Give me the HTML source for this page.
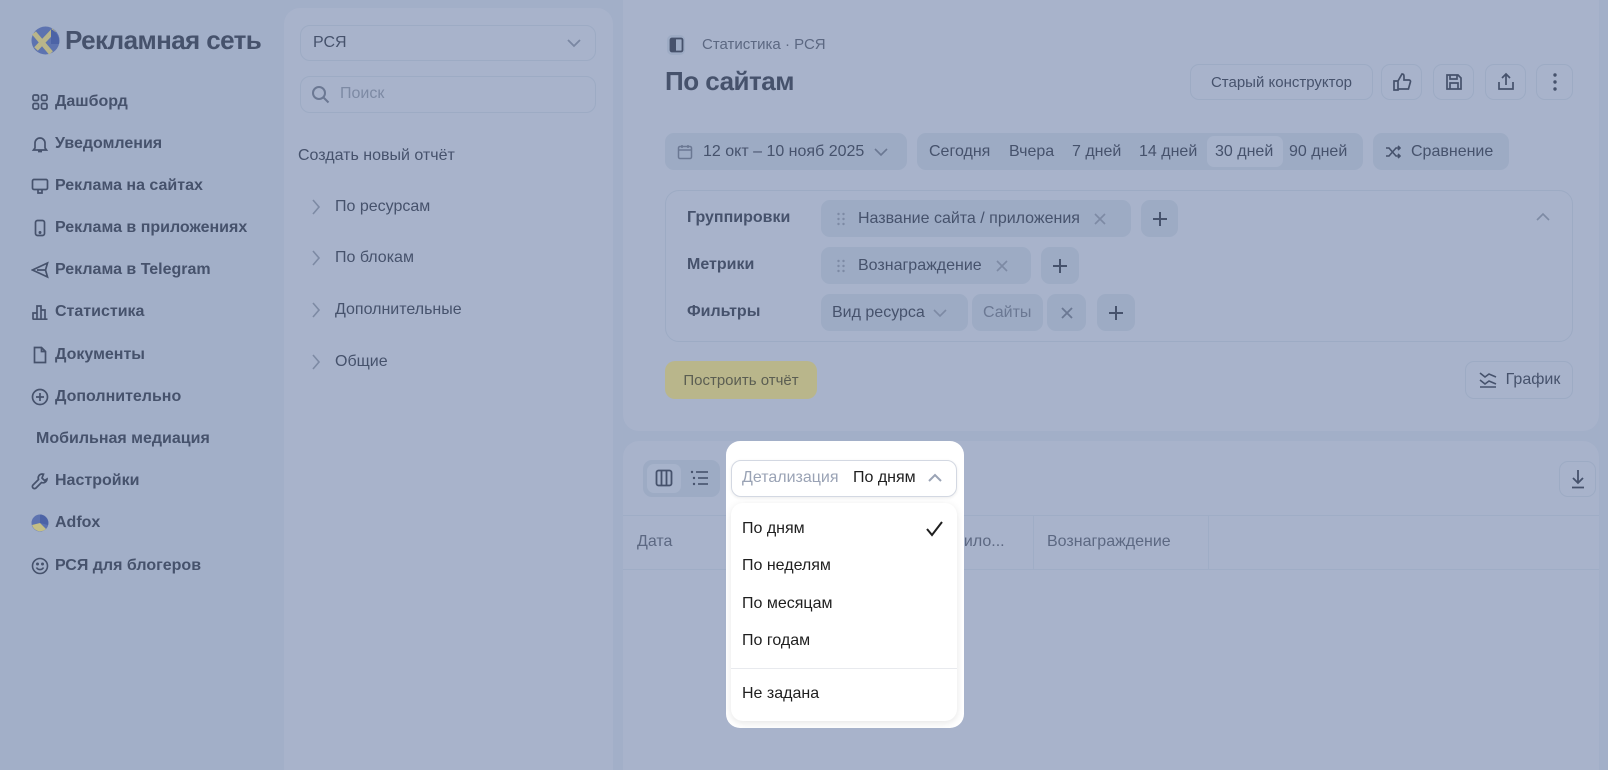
<!DOCTYPE html>
<html style="width:1608px;height:770px;overflow:hidden"><head><meta charset="utf-8"><style>
*{box-sizing:border-box;margin:0;padding:0}
html,body{width:1608px;height:770px;overflow:hidden}
body{background:#a2afc8;font-family:"Liberation Sans","DejaVu Sans",sans-serif;color:#434f69;position:relative}
.a{position:absolute}
.nav{position:absolute;left:31px;font-size:16px;font-weight:bold;color:#46526c;display:flex;align-items:center;gap:6px;height:20px}
.nav svg{width:18px;height:18px}
.panel{position:absolute;background:#a8b3cb;border-radius:16px}
.btn{position:absolute;border:1px solid #9dabc4;border-radius:9px;display:flex;align-items:center;justify-content:center;font-size:15px;color:#46526c}
.chip{position:absolute;background:#9dabc4;border-radius:9px;display:flex;align-items:center;font-size:16px;color:#46526c;height:37px}
.tree{position:absolute;left:310px;font-size:16px;color:#46526c}
.tree span{position:absolute;left:25px;white-space:nowrap}
.mi{position:absolute;left:742px;font-size:16px;color:#1f1f1f}
</style></head><body>

<!-- sidebar -->
<svg class="a" style="left:31px;top:26px" width="29" height="29" viewBox="0 0 29 29"><circle cx="14.5" cy="14.5" r="14" fill="#5d73b0"/><path d="M3 7 L20 27 M5 23 L23 4" stroke="#b9b58a" stroke-width="5"/><path d="M20 3 A14 14 0 0 1 28 18 L20 18Z" fill="#4c63a6"/></svg>
<div class="a" style="left:65px;top:25px;font-size:26px;font-weight:bold;color:#46526c;letter-spacing:-0.6px">Рекламная сеть</div>

<div class="nav" style="top:92px"><svg viewBox="0 0 18 18" fill="none" stroke="#46526c" stroke-width="1.7"><rect x="2" y="2" width="5.5" height="5.5" rx="1.5"/><rect x="10.5" y="2" width="5.5" height="5.5" rx="1.5"/><rect x="2" y="10.5" width="5.5" height="5.5" rx="1.5"/><rect x="10.5" y="10.5" width="5.5" height="5.5" rx="1.5"/></svg>Дашборд</div>
<div class="nav" style="top:134px"><svg viewBox="0 0 18 18" fill="none" stroke="#46526c" stroke-width="1.7"><path d="M4 13V8a5 5 0 0 1 10 0v5l1.5 2h-13z M7 16.5h4"/></svg>Уведомления</div>
<div class="nav" style="top:176px"><svg viewBox="0 0 18 18" fill="none" stroke="#46526c" stroke-width="1.7"><rect x="1.5" y="2.5" width="15" height="10" rx="1.5"/><path d="M7 13v3h4v-3"/></svg>Реклама на сайтах</div>
<div class="nav" style="top:218px"><svg viewBox="0 0 18 18" fill="none" stroke="#46526c" stroke-width="1.7"><rect x="4.5" y="1.5" width="9" height="15" rx="2"/><circle cx="9" cy="13.5" r=".6" fill="#46526c"/></svg>Реклама в приложениях</div>
<div class="nav" style="top:260px"><svg viewBox="0 0 18 18" fill="none" stroke="#46526c" stroke-width="1.7"><path d="M16.5 2 L1.5 9 L16.5 16 L14.5 9Z M14.5 9 H6"/></svg>Реклама в Telegram</div>
<div class="nav" style="top:302px"><svg viewBox="0 0 18 18" fill="none" stroke="#46526c" stroke-width="1.7"><path d="M2 16V10h4v6 M6 16V3h4v13 M10 16V7h4v9 M1.5 16.2h15"/></svg>Статистика</div>
<div class="nav" style="top:345px"><svg viewBox="0 0 18 18" fill="none" stroke="#46526c" stroke-width="1.7"><path d="M3.5 1.5h7l4 4v11h-11z M10.5 1.5v4h4"/></svg>Документы</div>
<div class="nav" style="top:387px"><svg viewBox="0 0 18 18" fill="none" stroke="#46526c" stroke-width="1.7"><circle cx="9" cy="9" r="7.5"/><path d="M9 5v8M5 9h8"/></svg>Дополнительно</div>
<div class="nav" style="top:429px;left:36px">Мобильная медиация</div>
<div class="nav" style="top:471px"><svg viewBox="0 0 18 18" fill="none" stroke="#46526c" stroke-width="1.7"><path d="M11 2a4 4 0 0 0-3.5 5.5L2 13a2 2 0 0 0 3 3l5.5-5.5A4 4 0 0 0 16 7l-2.5 1.5-2.5-2.5L12.5 2.2z"/></svg>Настройки</div>
<div class="nav" style="top:513px"><svg viewBox="0 0 18 18"><circle cx="9" cy="9" r="8.5" fill="#5d73b0"/><path d="M1 11 L9 9 L15 15 A8.5 8.5 0 0 1 1 11Z" fill="#c5bf84"/><path d="M9 9 L9 .5 A8.5 8.5 0 0 1 17 11Z" fill="#4c63a6"/></svg>Adfox</div>
<div class="nav" style="top:556px"><svg viewBox="0 0 18 18" fill="none" stroke="#46526c" stroke-width="1.6"><circle cx="9" cy="9" r="7.5"/><path d="M5.5 10.5a4 4 0 0 0 7 0"/><circle cx="6.5" cy="7" r=".7" fill="#46526c"/><circle cx="11.5" cy="7" r=".7" fill="#46526c"/></svg>РСЯ для блогеров</div>

<!-- second panel -->
<div class="panel" style="left:284px;top:8px;width:329px;height:780px;border-bottom-left-radius:0;border-bottom-right-radius:0"></div>
<div class="a" style="left:300px;top:25px;width:296px;height:36px;border:1px solid #9dabc4;border-radius:10px"></div>
<div class="a" style="left:313px;top:34px;font-size:16px;color:#46526c">РСЯ</div>
<svg class="a" style="left:566px;top:37px" width="16" height="12"><path d="M2 3l6 6 6-6" stroke="#7a87a2" stroke-width="1.8" fill="none"/></svg>
<div class="a" style="left:300px;top:76px;width:296px;height:37px;border:1px solid #9dabc4;border-radius:10px"></div>
<svg class="a" style="left:311px;top:85px" width="20" height="20" fill="none" stroke="#6b7893" stroke-width="2"><circle cx="8" cy="8" r="6"/><path d="M12.5 12.5l5 5"/></svg>
<div class="a" style="left:340px;top:85px;font-size:16px;color:#7d8aa4">Поиск</div>
<div class="a" style="left:298px;top:147px;font-size:16px;color:#46526c">Создать новый отчёт</div>
<div class="tree" style="top:198px"><svg width="12" height="18"><path d="M3 2l6 7-6 7" stroke="#7d8aa4" stroke-width="1.6" fill="none"/></svg><span style="top:0">По ресурсам</span></div>
<div class="tree" style="top:249px"><svg width="12" height="18"><path d="M3 2l6 7-6 7" stroke="#7d8aa4" stroke-width="1.6" fill="none"/></svg><span style="top:0">По блокам</span></div>
<div class="tree" style="top:301px"><svg width="12" height="18"><path d="M3 2l6 7-6 7" stroke="#7d8aa4" stroke-width="1.6" fill="none"/></svg><span style="top:0">Дополнительные</span></div>
<div class="tree" style="top:353px"><svg width="12" height="18"><path d="M3 2l6 7-6 7" stroke="#7d8aa4" stroke-width="1.6" fill="none"/></svg><span style="top:0">Общие</span></div>

<!-- main top panel -->
<div class="panel" style="left:623px;top:-20px;width:976px;height:451px"></div>
<div class="a" style="left:667px;top:35px;width:18px;height:20px;border-radius:5px;background:#9dabc4"></div>
<svg class="a" style="left:669px;top:37px" width="15" height="16"><rect x="1.5" y="1.5" width="12" height="13" rx="1.5" fill="none" stroke="#46526c" stroke-width="1.8"/><rect x="2" y="2" width="5" height="12" fill="#46526c"/></svg>
<div class="a" style="left:702px;top:36px;font-size:15px;color:#5c6882">Статистика · РСЯ</div>
<div class="a" style="left:665px;top:66px;font-size:26px;font-weight:bold;color:#46526c;letter-spacing:-0.5px">По сайтам</div>
<div class="btn" style="left:1190px;top:64px;width:183px;height:36px">Старый конструктор</div>
<div class="btn" style="left:1381px;top:64px;width:41px;height:36px"><svg width="20" height="20" fill="none" stroke="#46526c" stroke-width="1.7"><path d="M6 9v9H2V9z M6 9l4-7c2 0 2 1.5 2 3v3h5a1.5 1.5 0 0 1 1.4 2l-2 7H6"/></svg></div>
<div class="btn" style="left:1433px;top:64px;width:41px;height:36px"><svg width="20" height="20" fill="none" stroke="#46526c" stroke-width="1.7"><path d="M3 3h11l3 3v11H3z M6 3v4h7V3 M6 17v-6h8v6"/></svg></div>
<div class="btn" style="left:1485px;top:64px;width:41px;height:36px"><svg width="20" height="20" fill="none" stroke="#46526c" stroke-width="1.7"><path d="M10 13V2M6 6l4-4 4 4M3 10v7h14v-7"/></svg></div>
<div class="btn" style="left:1536px;top:64px;width:37px;height:36px"><svg width="4" height="18"><circle cx="2" cy="2" r="1.7" fill="#46526c"/><circle cx="2" cy="9" r="1.7" fill="#46526c"/><circle cx="2" cy="16" r="1.7" fill="#46526c"/></svg></div>

<div class="chip" style="left:665px;top:133px;width:242px;padding-left:12px;gap:10px"><svg width="16" height="16" fill="none" stroke="#6b7893" stroke-width="1.5"><rect x="1.5" y="2.5" width="13" height="12" rx="1.5"/><path d="M5 1v3M11 1v3M1.5 6h13"/></svg>12 окт – 10 нояб 2025<svg width="14" height="10"><path d="M1 2l6 6 6-6" stroke="#6b7893" stroke-width="1.6" fill="none"/></svg></div>
<div class="chip" style="left:917px;top:133px;width:446px;padding-left:12px;font-size:16px">
<span style="position:absolute;left:12px">Сегодня</span><span style="position:absolute;left:92px">Вчера</span><span style="position:absolute;left:155px">7 дней</span><span style="position:absolute;left:222px">14 дней</span>
<span style="position:absolute;left:290px;top:3px;height:31px;width:76px;background:#a7b3cb;border-radius:7px"></span><span style="position:absolute;left:298px">30 дней</span><span style="position:absolute;left:372px">90 дней</span></div>
<div class="chip" style="left:1373px;top:133px;width:136px;padding-left:12px;gap:10px"><svg width="16" height="16" fill="none" stroke="#46526c" stroke-width="1.6"><path d="M1 4h3l7 8h4M1 12h3l7-8h4M13 2l2 2-2 2M13 10l2 2-2 2"/></svg>Сравнение</div>

<div class="a" style="left:665px;top:190px;width:908px;height:152px;border:1px solid #9dabc4;border-radius:14px"></div>
<div class="a" style="left:687px;top:209px;font-size:16px;font-weight:bold;color:#46526c">Группировки</div>
<div class="a" style="left:687px;top:256px;font-size:16px;font-weight:bold;color:#46526c">Метрики</div>
<div class="a" style="left:687px;top:303px;font-size:16px;font-weight:bold;color:#46526c">Фильтры</div>
<svg class="a" style="left:1535px;top:212px" width="16" height="10"><path d="M2 8l6-6 6 6" stroke="#7d8aa4" stroke-width="1.6" fill="none"/></svg>

<div class="chip" style="left:821px;top:200px;width:310px;padding-left:16px;gap:13px"><svg width="8" height="14"><g fill="#7d8aa4"><circle cx="1.5" cy="2" r="1.2"/><circle cx="6.5" cy="2" r="1.2"/><circle cx="1.5" cy="7" r="1.2"/><circle cx="6.5" cy="7" r="1.2"/><circle cx="1.5" cy="12" r="1.2"/><circle cx="6.5" cy="12" r="1.2"/></g></svg>Название сайта / приложения<svg width="14" height="14"><path d="M2 2l10 10M12 2L2 12" stroke="#7d8aa4" stroke-width="1.6"/></svg></div>
<div class="chip" style="left:1141px;top:200px;width:37px;justify-content:center"><svg width="18" height="18"><path d="M9 2v14M2 9h14" stroke="#46526c" stroke-width="2"/></svg></div>
<div class="chip" style="left:821px;top:247px;width:210px;padding-left:16px;gap:13px"><svg width="8" height="14"><g fill="#7d8aa4"><circle cx="1.5" cy="2" r="1.2"/><circle cx="6.5" cy="2" r="1.2"/><circle cx="1.5" cy="7" r="1.2"/><circle cx="6.5" cy="7" r="1.2"/><circle cx="1.5" cy="12" r="1.2"/><circle cx="6.5" cy="12" r="1.2"/></g></svg>Вознаграждение<svg width="14" height="14"><path d="M2 2l10 10M12 2L2 12" stroke="#7d8aa4" stroke-width="1.6"/></svg></div>
<div class="chip" style="left:1041px;top:247px;width:38px;justify-content:center"><svg width="18" height="18"><path d="M9 2v14M2 9h14" stroke="#46526c" stroke-width="2"/></svg></div>
<div class="chip" style="left:821px;top:294px;width:147px;padding-left:11px;gap:8px">Вид ресурса<svg width="14" height="10"><path d="M1 2l6 6 6-6" stroke="#7d8aa4" stroke-width="1.6" fill="none"/></svg></div>
<div class="chip" style="left:972px;top:294px;width:71px;padding-left:11px;color:#6b7893">Сайты</div>
<div class="chip" style="left:1047px;top:294px;width:39px;justify-content:center"><svg width="14" height="14"><path d="M2 2l10 10M12 2L2 12" stroke="#6b7893" stroke-width="1.8"/></svg></div>
<div class="chip" style="left:1097px;top:294px;width:38px;justify-content:center"><svg width="18" height="18"><path d="M9 2v14M2 9h14" stroke="#46526c" stroke-width="2"/></svg></div>

<div class="a" style="left:665px;top:361px;width:152px;height:38px;background:#b9b68b;border-radius:10px;font-size:15px;color:#5b5e52;display:flex;align-items:center;justify-content:center">Построить отчёт</div>
<div class="btn" style="left:1465px;top:361px;width:108px;height:38px;gap:8px;font-size:16px"><svg width="20" height="18" fill="none" stroke="#46526c" stroke-width="1.6"><path d="M2 2l5 4 4-3 7 3M2 9l5 4 4-3 7 3M2 16h16"/></svg>График</div>

<!-- bottom panel -->
<div class="panel" style="left:623px;top:441px;width:976px;height:329px;border-bottom-left-radius:0;border-bottom-right-radius:0"></div>
<div class="a" style="left:643px;top:460px;width:77px;height:37px;background:#9dabc4;border-radius:9px"></div>
<div class="a" style="left:647px;top:464px;width:34px;height:29px;background:#a7b3cb;border-radius:7px"></div>
<svg class="a" style="left:655px;top:469px" width="18" height="18" fill="none" stroke="#46526c" stroke-width="1.8"><rect x="1.5" y="1.5" width="15" height="15" rx="2"/><path d="M6.5 2v14M11.5 2v14"/></svg>
<svg class="a" style="left:690px;top:470px" width="18" height="16" fill="#46526c"><circle cx="2" cy="2" r="1.2"/><circle cx="4" cy="8" r="1.2"/><circle cx="4" cy="14" r="1.2"/><rect x="6" y="1.2" width="12" height="1.6"/><rect x="8" y="7.2" width="10" height="1.6"/><rect x="8" y="13.2" width="10" height="1.6"/></svg>
<div class="btn" style="left:1559px;top:461px;width:37px;height:36px"><svg width="18" height="20" fill="none" stroke="#46526c" stroke-width="1.8"><path d="M9 1v13M4 9l5 5 5-5M3 18.5h12"/></svg></div>
<div class="a" style="left:623px;top:515px;width:976px;height:1px;background:#9fadc6"></div>
<div class="a" style="left:623px;top:569px;width:976px;height:1px;background:#9fadc6"></div>
<div class="a" style="left:1033px;top:515px;width:1px;height:54px;background:#9fadc6"></div>
<div class="a" style="left:1208px;top:515px;width:1px;height:54px;background:#9fadc6"></div>
<div class="a" style="left:637px;top:533px;font-size:16px;color:#5c6882">Дата</div>
<div class="a" style="left:955px;top:533px;font-size:16px;color:#5c6882">рило...</div>
<div class="a" style="left:1047px;top:533px;font-size:16px;color:#5c6882">Вознаграждение</div>

<!-- popup -->
<div class="a" style="left:726px;top:441px;width:238px;height:287px;background:#fff;border-radius:14px"></div>
<div class="a" style="left:731px;top:460px;width:226px;height:37px;border:1px solid #d3d8e2;border-radius:10px;box-shadow:0 1px 3px rgba(0,0,0,.08)"></div>
<div class="a" style="left:742px;top:469px;font-size:16px;color:#9aa3b5">Детализация</div>
<div class="a" style="left:853px;top:469px;font-size:16px;color:#1f1f1f">По дням</div>
<svg class="a" style="left:927px;top:473px" width="16" height="10"><path d="M2 8l6-6 6 6" stroke="#9aa3b5" stroke-width="2" fill="none"/></svg>
<div class="a" style="left:731px;top:503px;width:226px;height:218px;border-radius:12px;box-shadow:0 2px 8px rgba(0,0,0,.10)"></div>
<div class="mi" style="top:520px">По дням</div>
<svg class="a" style="left:925px;top:520px" width="19" height="17"><path d="M2 9l5 6L17 2" stroke="#1f1f1f" stroke-width="2" fill="none"/></svg>
<div class="mi" style="top:557px">По неделям</div>
<div class="mi" style="top:595px">По месяцам</div>
<div class="mi" style="top:632px">По годам</div>
<div class="a" style="left:731px;top:668px;width:226px;height:1px;background:#e8eaee"></div>
<div class="mi" style="top:685px">Не задана</div>
</body></html>
